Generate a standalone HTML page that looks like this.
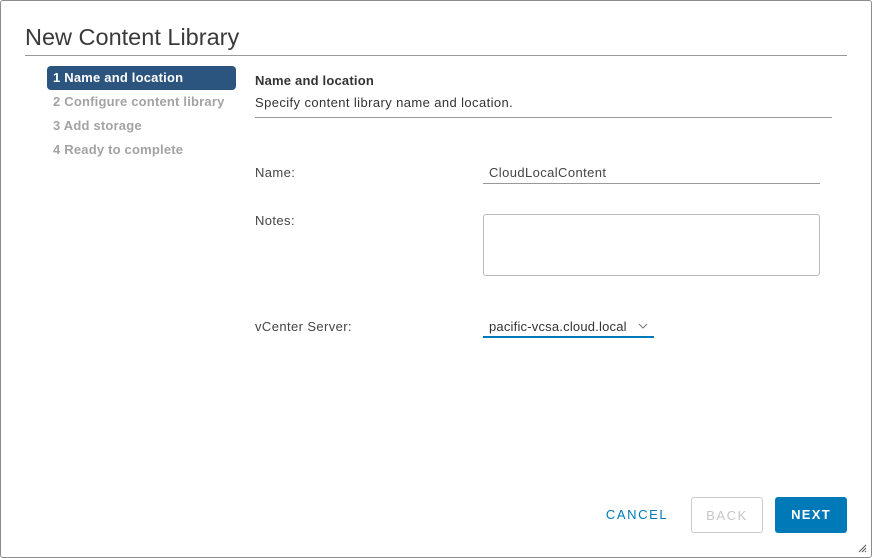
<!DOCTYPE html>
<html><head><style>
*{margin:0;padding:0;box-sizing:border-box}
body{width:872px;height:558px;background:#fff;font-family:"Liberation Sans",sans-serif;position:relative;overflow:hidden}
.frame{position:absolute;left:0;top:0;width:872px;height:558px;border:1px solid #8c8c8c;border-radius:3px}
.abs{position:absolute;white-space:nowrap}
.title{left:25px;top:24px;font-size:23.5px;color:#3a3a3a;font-weight:300}
.hr{position:absolute;height:1px;background:#9a9a9a}
.step{left:53px;font-size:13px;font-weight:bold;color:#a3a3a3;letter-spacing:0.2px}
.sel{position:absolute;left:47px;top:66px;width:189px;height:24px;background:#2b547e;border-radius:4px}
.lbl{font-size:13px;color:#444;letter-spacing:0.4px}
.btn{position:absolute;top:497px;height:36px;border-radius:3px;font-size:13px;font-weight:bold;letter-spacing:1.3px;text-align:center;line-height:36px}
</style></head><body>
<div class="frame"></div>
<div class="abs title">New Content Library</div>
<div class="hr" style="left:25px;top:55px;width:822px"></div>
<div class="sel"></div>
<div class="abs step" style="top:70px;color:#fff">1 Name and location</div>
<div class="abs step" style="top:94px">2 Configure content library</div>
<div class="abs step" style="top:118px">3 Add storage</div>
<div class="abs step" style="top:142px">4 Ready to complete</div>
<div class="abs lbl" style="left:255px;top:73px;font-weight:bold;color:#333;letter-spacing:0.2px">Name and location</div>
<div class="abs lbl" style="left:255px;top:95px;color:#333">Specify content library name and location.</div>
<div class="hr" style="left:255px;top:117px;width:577px"></div>
<div class="abs lbl" style="left:255px;top:165px">Name:</div>
<div class="abs lbl" style="left:489px;top:165px">CloudLocalContent</div>
<div class="hr" style="left:483px;top:183px;width:337px;background:#999"></div>
<div class="abs lbl" style="left:255px;top:213px">Notes:</div>
<div style="position:absolute;left:483px;top:214px;width:337px;height:62px;border:1px solid #bbb;border-radius:3px"></div>
<div class="abs lbl" style="left:255px;top:319px">vCenter Server:</div>
<div class="abs lbl" style="left:489px;top:319px;color:#333;letter-spacing:0.2px">pacific-vcsa.cloud.local</div>
<svg class="abs" style="left:637px;top:321px" width="12" height="10"><path d="M2 3l4 4 4-4" stroke="#777" fill="none" stroke-width="1"/></svg>
<div class="hr" style="left:483px;top:336px;width:171px;height:2px;background:#0079b8"></div>
<div class="btn" style="left:595px;width:84px;color:#0079b8;font-weight:normal;letter-spacing:1.6px">CANCEL</div>
<div class="btn" style="left:691px;width:72px;border:1px solid #ccc;color:#c6c6c6;font-weight:normal;letter-spacing:1.6px">BACK</div>
<div class="btn" style="left:775px;width:72px;background:#0079b8;color:#fff">NEXT</div>
<svg class="abs" style="left:858px;top:544px" width="9" height="9"><path d="M8 1L1 8M8 4L4 8M8 7L7 8" stroke="#555"/></svg>
</body></html>
